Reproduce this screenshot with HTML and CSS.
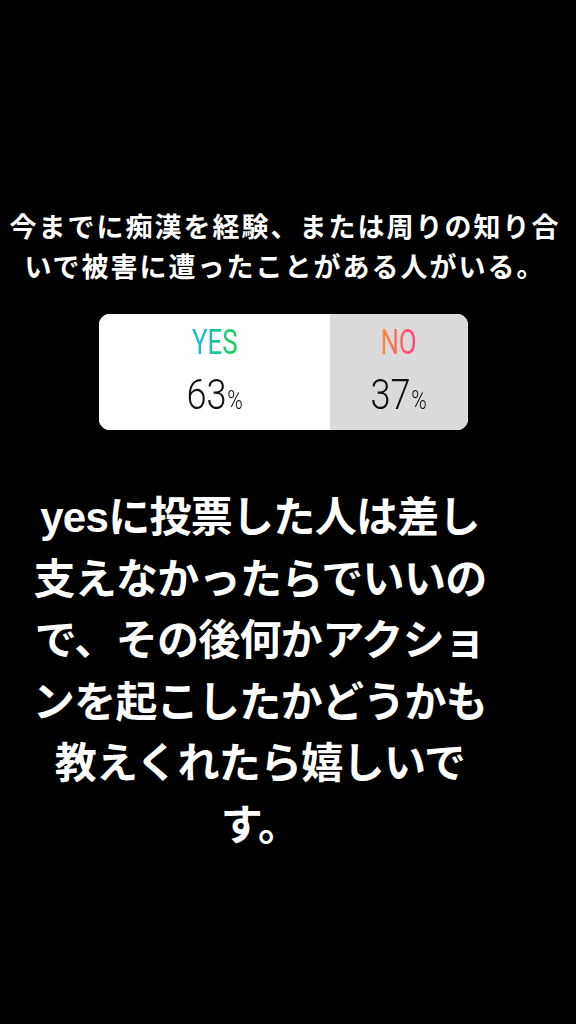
FILE: index.html
```html
<!DOCTYPE html>
<html>
<head>
    <meta charset="utf-8">
    <link rel="stylesheet" href="styles.css">
</head>
<body>
    <div class="story">
        <div class="question">今までに痴漢を経験、または周りの知り合<br>いで被害に遭ったことがある人がいる。</div>
        <div class="poll">
            <div class="option yes">
                <span class="label">YES</span>
                <span class="result"><span class="num">63</span><span class="pct">%</span></span>
            </div>
            <div class="option no">
                <span class="label">NO</span>
                <span class="result"><span class="num">37</span><span class="pct">%</span></span>
            </div>
        </div>
        <div class="message">yesに投票した人は差し<br>支えなかったらでいいの<br>で、その後何かアクショ<br>ンを起こしたかどうかも<br>教えくれたら嬉しいで<br>す。</div>
    </div>
</body>
</html>
```
FILE: styles.css
```css
body {
    background-color: #000;
    margin: 0;
    padding: 0;
    font-family: "Liberation Sans", "Noto Sans CJK JP", sans-serif;
}
.story {
    width: 576px;
    height: 1024px;
    display: flex;
    flex-direction: column;
    align-items: center;
    padding-top: 208px;
    box-sizing: border-box;
}
.question {
    color: #fff;
    font-size: 27px;
    font-weight: 700;
    line-height: 40px;
    letter-spacing: 2px;
    text-align: center;
    margin-right: 6px;
}
.poll {
    margin-top: 26px;
    margin-right: 9px;
    width: 369px;
    height: 116px;
    border-radius: 11px;
    overflow: hidden;
    display: flex;
    background-color: #fff;
}
.option {
    display: flex;
    flex-direction: column;
    align-items: center;
    font-family: Roboto, sans-serif;
}
.option.yes {
    width: 231px;
    background-color: #fff;
}
.option.no {
    flex: 1;
    background-color: #dadada;
}
.label {
    display: inline-block;
    margin-top: 10px;
    font-size: 35px;
    line-height: 38px;
    font-weight: 400;
    transform: scaleX(0.74);
    -webkit-background-clip: text;
    background-clip: text;
    color: transparent;
}
.yes .label {
    background-image: linear-gradient(90deg, #1eb6f0, #15d14a);
}
.no .label {
    background-image: linear-gradient(90deg, #ff8a3a, #ff3d86);
}
.result {
    display: inline-block;
    margin-top: 10px;
    color: #111;
    font-weight: 300;
    transform: scaleX(0.84);
}
.num {
    font-size: 43px;
    line-height: 44px;
}
.pct {
    font-size: 25px;
    margin-left: 1px;
}
.message {
    margin-top: 57px;
    margin-right: 56px;
    color: #fff;
    font-size: 42px;
    font-weight: 700;
    line-height: 61.5px;
    text-align: center;
    letter-spacing: -0.7px;
}
```
